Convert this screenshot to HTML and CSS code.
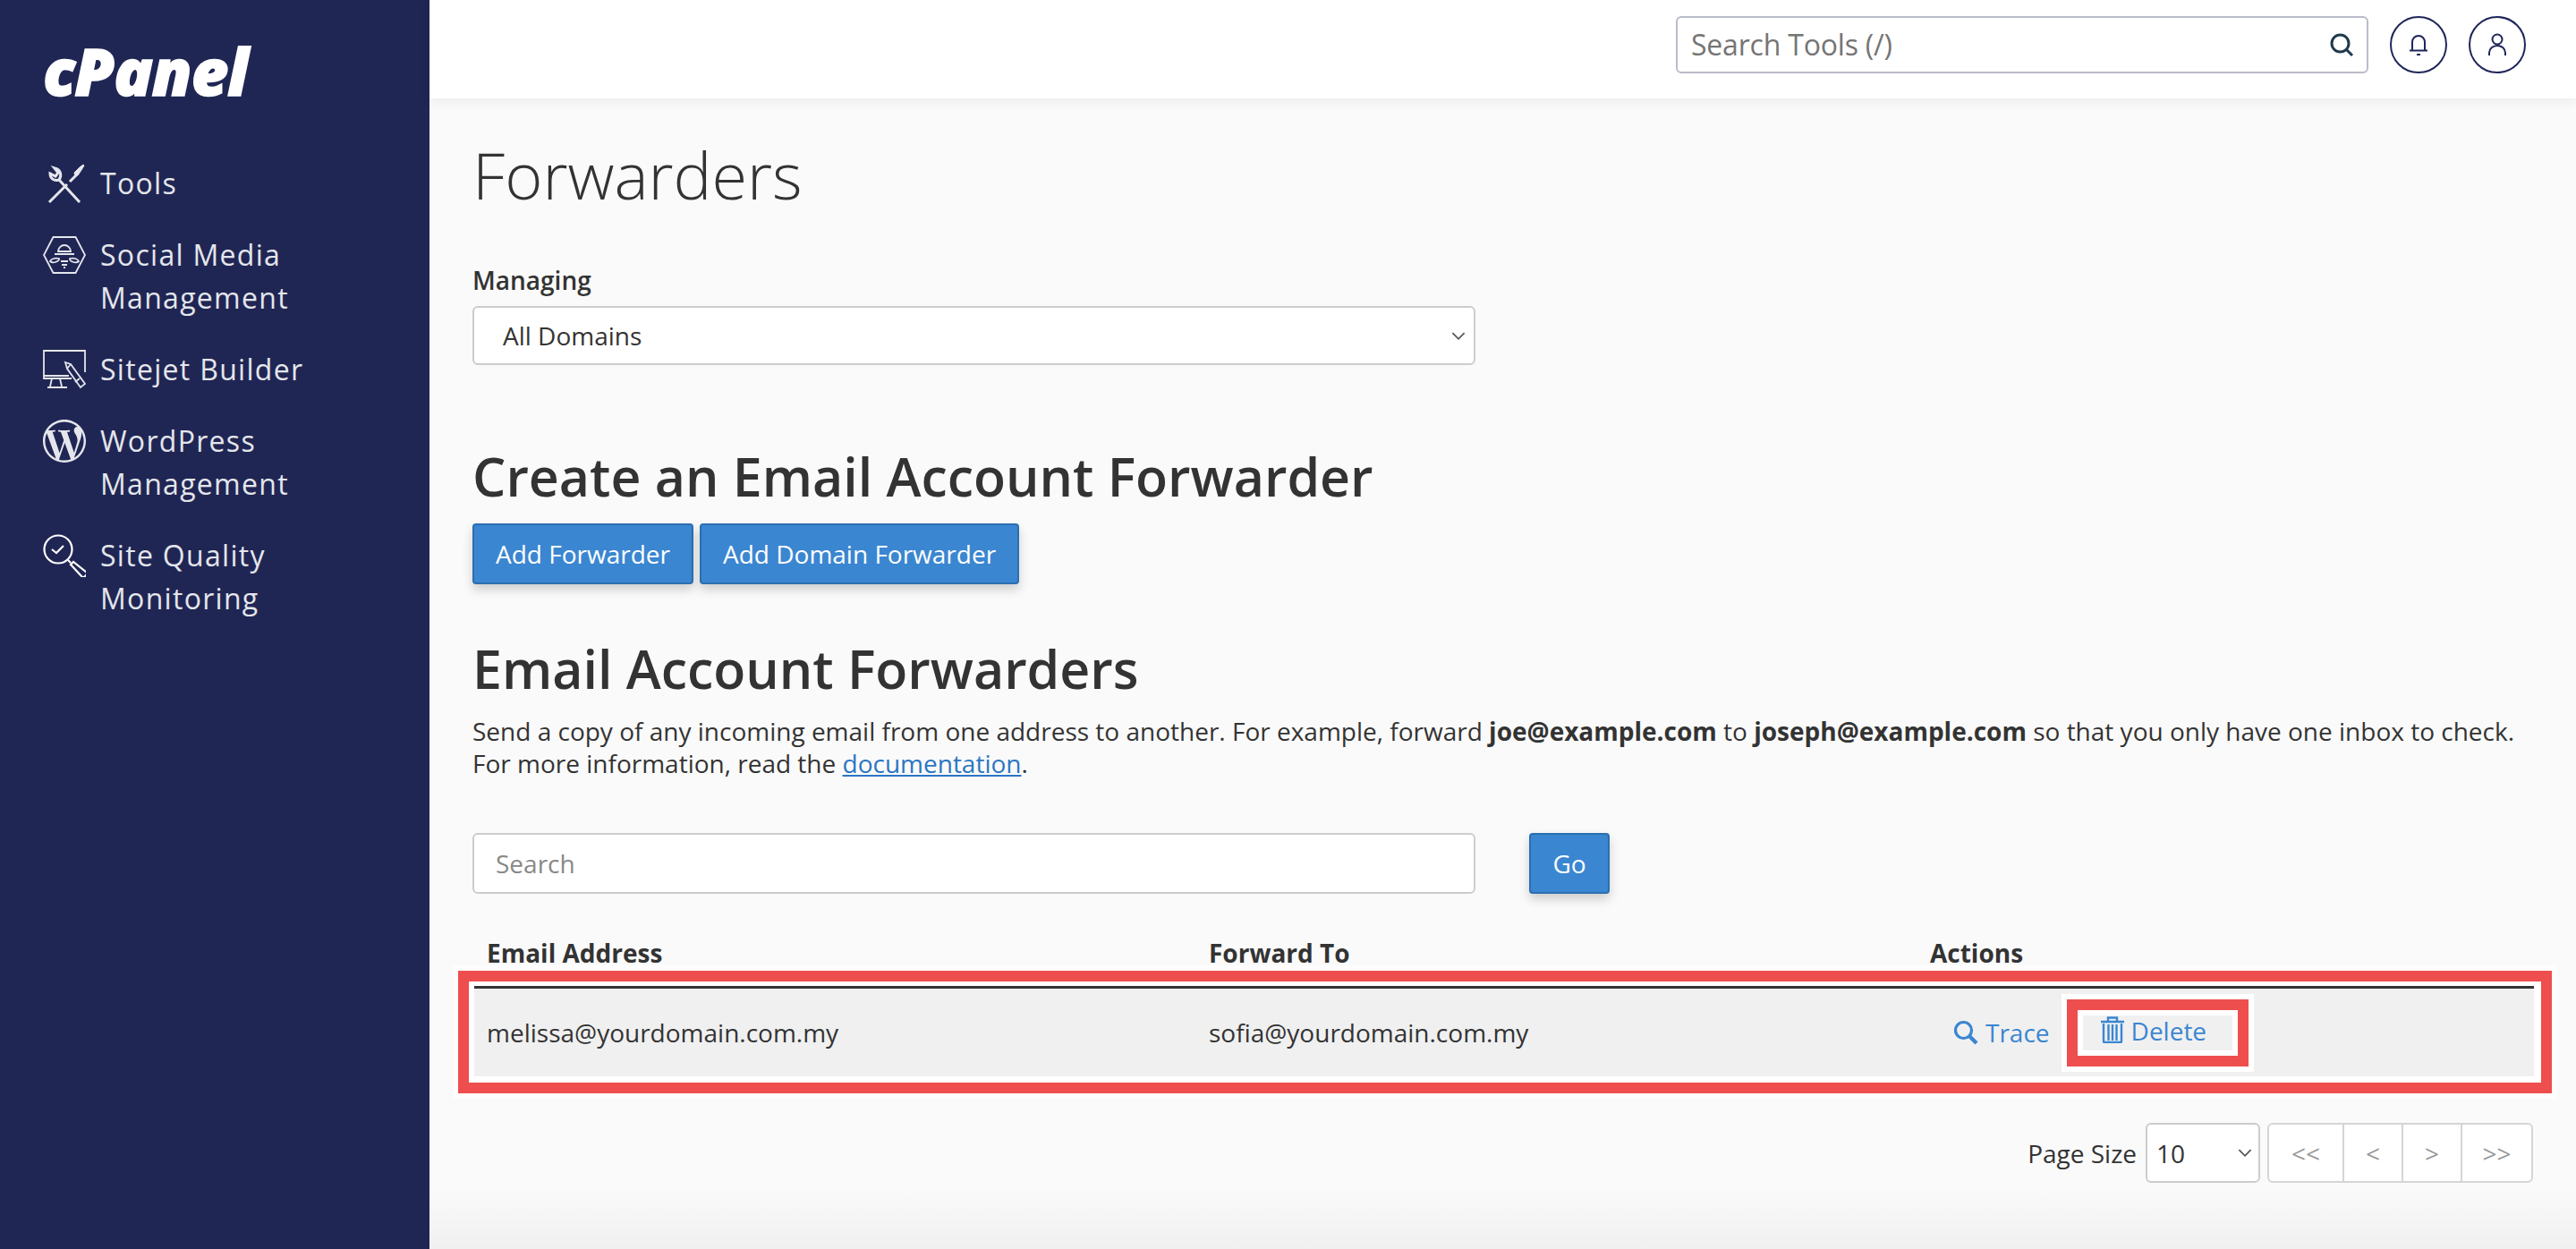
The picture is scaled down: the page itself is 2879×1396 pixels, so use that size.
FILE: index.html
```html
<!DOCTYPE html>
<html lang="en">
  <head>
    <meta charset="utf-8">
    <title>Forwarders</title>
    <link rel="stylesheet" href="styles.css">
  </head>
  <body>
    <aside class="sidebar">
      <div class="logo">cPanel</div>
      <nav class="side-nav">
        <a class="nav-item" href="#">
          <svg class="nav-icon" viewBox="0 0 48 48" fill="none" stroke="currentColor" stroke-width="3">
            <path d="M7 45 L27 25 M30 22 L37 15" />
            <path d="M36 16 l-1-4 l6-6 l4-3 l1 1 l-3 5 l-4 6z" fill="currentColor" stroke-width="1" />
            <path d="M41 45 L18 20 M18 20 c3-4 2-10 -2-12 l-3-1 l4 5 l-3 4 l-6-3 c0 5 4 9 10 7z" />
          </svg>
          <span>Tools</span>
        </a>
        <a class="nav-item" href="#">
          <svg class="nav-icon" viewBox="0 0 48 48" fill="none" stroke="currentColor" stroke-width="1.8">
            <path d="M11.5 4 H36.5 L47 24 L36.5 44 H11.5 L1 24z" />
            <path d="M17 20 a7 7 0 0 1 14 0z M13 23 H35 M8 31 c1-3 6-4 10-3 c1 3 -7 6 -10 3z M40 31 c-1-3 -6-4 -10-3 c-1 3 7 6 10 3z M20 31 H28 M21 35 H27 M23 38 H25" />
          </svg>
          <span>Social Media<br>Management</span>
        </a>
        <a class="nav-item" href="#">
          <svg class="nav-icon" viewBox="0 0 48 48" fill="none" stroke="currentColor" stroke-width="1.8">
            <path d="M47 27 V3 H1 V34 H32 M1 31 H29 M10 34 L8 43 M19 34 L21 43 M5 44 H27" />
            <path d="M25 16 l6 2 l16 22 l-5 4 l-15 -21z M27 23 l4-5 M41 34 l-5 4" />
          </svg>
          <span>Sitejet Builder</span>
        </a>
        <a class="nav-item" href="#">
          <svg class="nav-icon" viewBox="0 0 24 24" fill="currentColor">
            <path d="M21.469 6.825c.84 1.537 1.318 3.3 1.318 5.175 0 3.979-2.156 7.456-5.363 9.325l3.295-9.527c.615-1.54.82-2.771.82-3.864 0-.405-.026-.78-.07-1.11m-7.981.105c.647-.03 1.232-.105 1.232-.105.582-.075.514-.93-.067-.899 0 0-1.755.135-2.88.135-1.064 0-2.85-.15-2.85-.15-.585-.03-.661.855-.075.885 0 0 .54.061 1.125.09l1.68 4.605-2.37 7.08L5.354 6.9c.649-.03 1.234-.1 1.234-.1.585-.075.516-.93-.065-.896 0 0-1.746.138-2.874.138-.2 0-.438-.008-.69-.015C4.911 3.15 8.235 1.215 12 1.215c2.809 0 5.365 1.072 7.286 2.833-.046-.003-.091-.009-.141-.009-1.06 0-1.812.923-1.812 1.914 0 .89.513 1.643 1.06 2.531.411.72.89 1.643.89 2.977 0 .915-.354 1.994-.821 3.479l-1.075 3.585-3.9-11.61.001.014zM12 22.784c-1.059 0-2.081-.153-3.048-.437l3.237-9.406 3.315 9.087c.024.053.05.101.078.149-1.12.393-2.325.609-3.582.609M1.211 12c0-1.564.336-3.05.935-4.39L7.29 21.709C3.694 19.96 1.212 16.271 1.211 12M12 0C5.385 0 0 5.385 0 12s5.385 12 12 12 12-5.385 12-12S18.615 0 12 0" />
          </svg>
          <span>WordPress<br>Management</span>
        </a>
        <a class="nav-item" href="#">
          <svg class="nav-icon" viewBox="0 0 48 48" fill="none" stroke="#fff" stroke-width="2.2">
            <circle cx="17" cy="17" r="15.5" />
            <path d="M10 17 l5 4 l8-8" />
            <path d="M28 29 l3 3 M31 34 l3-3 l15 12 c1 2 -3 6 -5 5z" />
          </svg>
          <span>Site Quality<br>Monitoring</span>
        </a>
      </nav>
    </aside>

    <div class="main">
      <header class="topbar">
        <div class="tool-search">
          <span class="tool-search-text">Search Tools (/)</span>
          <svg class="tool-search-icon" viewBox="0 0 28 28" fill="none" stroke="#1f3a4d" stroke-width="3">
            <circle cx="12.5" cy="12.5" r="9.5" />
            <path d="M19 19 l7 7" />
          </svg>
        </div>
        <button class="round-btn">
          <svg viewBox="0 0 28 28" fill="none" stroke="#20265a" stroke-width="2">
            <path d="M7 20 V11 a7 7 0 0 1 14 0 V20 M4 20.5 H24" />
            <path d="M12 25 H16" />
          </svg>
        </button>
        <button class="round-btn">
          <svg viewBox="0 0 28 28" fill="none" stroke="#20265a" stroke-width="2">
            <circle cx="14" cy="8" r="5.5" />
            <path d="M5 26 V23 a9 8 0 0 1 18 0 V26" />
          </svg>
        </button>
      </header>

      <main class="content">
        <h1 class="page-title">Forwarders</h1>

        <label class="field-label">Managing</label>
        <div class="select-box">
          <span>All Domains</span>
          <svg class="chevron" viewBox="0 0 16 10" fill="none" stroke="#555" stroke-width="1.6"><path d="M2 2 L8 8 L14 2" /></svg>
        </div>

        <h2 class="section-title first">Create an Email Account Forwarder</h2>
        <div class="btn-row">
          <button class="btn">Add Forwarder</button>
          <button class="btn">Add Domain Forwarder</button>
        </div>

        <h2 class="section-title second">Email Account Forwarders</h2>
        <p class="intro">Send a copy of any incoming email from one address to another. For example, forward <b>joe@example.com</b> to <b>joseph@example.com</b> so that you only have one inbox to check.<br>For more information, read the <a href="#">documentation</a>.</p>

        <div class="search-row">
          <div class="search-input">Search</div>
          <button class="btn go-btn">Go</button>
        </div>

        <div class="table-head">
          <div>Email Address</div>
          <div>Forward To</div>
          <div>Actions</div>
        </div>

        <div class="highlight">
          <div class="table-row">
            <div>melissa@yourdomain.com.my</div>
            <div>sofia@yourdomain.com.my</div>
            <div class="actions">
              <a class="action trace" href="#">
                <svg class="action-icon" viewBox="0 0 28 28" fill="none" stroke="currentColor" stroke-width="3.2">
                  <circle cx="11.5" cy="11.5" r="9" />
                  <path d="M18 18 l8 8" stroke-width="4.5" />
                </svg>
                Trace
              </a>
              <div class="highlight-small">
                <a class="action delete" href="#">
                  <svg class="action-icon trash" viewBox="0 0 26 30" fill="none" stroke="currentColor" stroke-width="2.4">
                    <path d="M0 6 H26 M8 6 V1.5 H18 V6" />
                    <path d="M3 8 V28 a1 1 0 0 0 1 1 H22 a1 1 0 0 0 1-1 V8 M8.5 9 V27 M13 9 V27 M17.5 9 V27" />
                  </svg>
                  Delete
                </a>
              </div>
            </div>
          </div>
        </div>

        <div class="pager-row">
          <span class="page-size-label">Page Size</span>
          <div class="page-size">
            <span>10</span>
            <svg class="chevron" viewBox="0 0 16 10" fill="none" stroke="#555" stroke-width="1.6"><path d="M2 2 L8 8 L14 2" /></svg>
          </div>
          <div class="pager">
            <span>&lt;&lt;</span>
            <span>&lt;</span>
            <span>&gt;</span>
            <span>&gt;&gt;</span>
          </div>
        </div>
      </main>
    </div>
  </body>
</html>
```

FILE: styles.css
```css
* {
  margin: 0;
  padding: 0;
  box-sizing: border-box;
}

html,
body {
  height: 100%;
  overflow: hidden;
}

body {
  display: flex;
  font-family: "Open Sans", "Liberation Sans", sans-serif;
  font-size: 28px;
  line-height: 36px;
  color: #333;
  background: #fafafa;
}

button {
  font-family: inherit;
}

/* sidebar */
.sidebar {
  width: 480px;
  flex-shrink: 0;
  background: #202654;
  padding: 39px 0 0 48px;
}

.logo {
  height: 80px;
  font-size: 72px;
  line-height: 80px;
  font-weight: 800;
  font-style: italic;
  letter-spacing: -1px;
  color: #fff;
  -webkit-text-stroke: 1.5px #fff;
}

.side-nav {
  margin-top: 62px;
  display: flex;
  flex-direction: column;
  gap: 32px;
}

.nav-item {
  display: flex;
  gap: 16px;
  color: #e4e6ec;
  text-decoration: none;
  font-size: 32px;
  line-height: 48px;
  letter-spacing: 1.3px;
}

.nav-icon {
  width: 48px;
  height: 48px;
  flex-shrink: 0;
}

/* top bar */
.main {
  flex: 1;
  min-width: 0;
  display: flex;
  flex-direction: column;
  background: linear-gradient(#fafafa 1330px, #f0f0f0);
}

.topbar {
  height: 110px;
  flex-shrink: 0;
  background: #fff;
  box-shadow: 0 4px 12px rgba(0, 0, 0, 0.06);
  display: flex;
  align-items: flex-start;
  padding: 18px 56px 0 0;
  justify-content: flex-end;
  gap: 24px;
}

.tool-search {
  width: 774px;
  height: 64px;
  border: 2px solid #babccb;
  border-radius: 6px;
  display: flex;
  align-items: center;
  justify-content: space-between;
  padding: 0 14px 0 15px;
  font-size: 32px;
  letter-spacing: -0.2px;
  color: #757575;
}

.tool-search-icon {
  width: 28px;
  height: 28px;
}

.round-btn {
  width: 64px;
  height: 64px;
  border: 2px solid #20265a;
  border-radius: 50%;
  background: #fff;
  display: flex;
  align-items: center;
  justify-content: center;
}

.round-btn svg {
  width: 28px;
  height: 28px;
}

/* content */
.content {
  padding: 0 48px;
}

.page-title {
  font-size: 72px;
  line-height: 86px;
  font-weight: 300;
  margin-top: 42px;
}

.field-label {
  display: block;
  font-weight: 600;
  margin-top: 57px;
}

.select-box {
  width: 1121px;
  height: 66px;
  margin-top: 11px;
  background: #fff;
  border: 2px solid #ccc;
  border-radius: 6px;
  display: flex;
  align-items: center;
  justify-content: space-between;
  padding: 0 8px 0 32px;
}

.chevron {
  width: 18px;
  height: 11px;
}

.section-title {
  font-size: 59px;
  line-height: 72px;
  font-weight: 600;
}

.section-title.first {
  margin-top: 88px;
}

.section-title.second {
  margin-top: 58px;
}

.btn-row {
  display: flex;
  gap: 7px;
  margin-top: 17px;
}

.btn {
  height: 68px;
  padding: 0 24px;
  background: #3b86d1;
  color: #fff;
  font-size: 28px;
  border: 2px solid #2b6fb0;
  border-radius: 4px;
  box-shadow: 0 6px 12px rgba(0, 0, 0, 0.18);
}

.intro {
  margin-top: 16px;
}

.intro a {
  color: #2a76c4;
}

.search-row {
  display: flex;
  margin-top: 60px;
}

.search-input {
  width: 1121px;
  height: 68px;
  background: #fff;
  border: 2px solid #ccc;
  border-radius: 6px;
  padding: 14px 24px;
  color: #888;
}

.go-btn {
  width: 90px;
  padding: 0;
  margin-left: 60px;
}

.table-head,
.table-row {
  display: grid;
  grid-template-columns: 807px 806px 1fr;
}

.table-head {
  margin-top: 48px;
  padding-left: 16px;
  font-weight: 700;
}

.highlight {
  margin: 2px -21px 0 -16px;
  height: 137px;
  border: 12px solid #ee4e4e;
  box-shadow: 0 0 0 6px #fdfdfd;
  background: #fff;
  padding: 5px 8px 7px 6px;
}

.table-row {
  height: 101px;
  background: #f0f0f0;
  border-top: 3px solid #333;
  align-items: center;
  padding-left: 14px;
}

.actions {
  display: flex;
  align-items: center;
  margin-left: 26px;
}

.action {
  display: flex;
  align-items: center;
  gap: 8px;
  color: #3b86d1;
  text-decoration: none;
}

.action-icon {
  width: 28px;
  height: 28px;
}

.action-icon.trash {
  width: 26px;
  height: 30px;
  align-self: flex-start;
  margin-top: 1px;
}

.highlight-small {
  width: 203px;
  height: 75px;
  margin-left: 19px;
  padding: 6px;
  border: 12px solid #ee4e4e;
  background: #fff;
  box-shadow: 0 0 0 6px #fff;
}

.delete {
  height: 39px;
  background: #f0f0f0;
  padding: 0 0 4px 20px;
}

.pager-row {
  display: flex;
  align-items: center;
  justify-content: flex-end;
  margin-top: 33px;
}

.page-size-label {
  margin-right: 10px;
}

.page-size {
  width: 128px;
  height: 67px;
  background: #fff;
  border: 2px solid #ccc;
  border-radius: 6px;
  display: flex;
  align-items: center;
  justify-content: space-between;
  padding: 0 6px 0 10px;
}

.pager {
  width: 297px;
  height: 67px;
  margin-left: 8px;
  background: #fff;
  border: 2px solid #d5d5d5;
  border-radius: 6px;
  display: grid;
  grid-template-columns: 82px 66px 66px 1fr;
  color: #999;
}

.pager span {
  display: flex;
  align-items: center;
  justify-content: center;
  border-left: 2px solid #d5d5d5;
}

.pager span:first-child {
  border-left: none;
}
```
